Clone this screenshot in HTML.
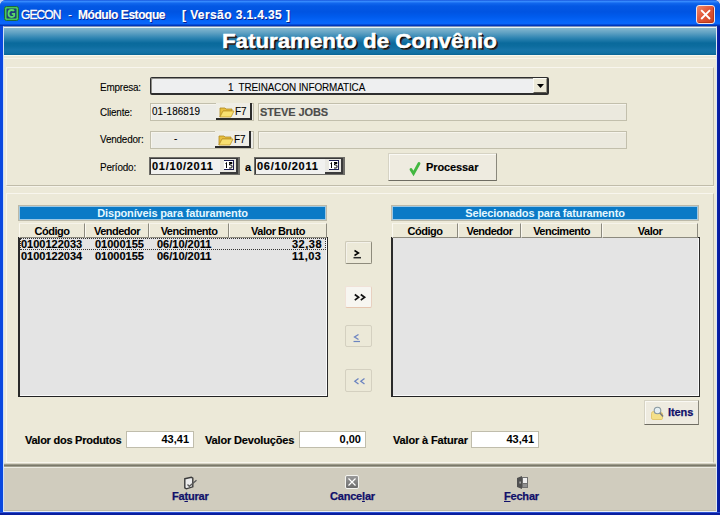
<!DOCTYPE html>
<html><head><meta charset="utf-8">
<style>
*{margin:0;padding:0;box-sizing:border-box}
html,body{width:720px;height:515px;overflow:hidden;background:#c8d4f0;font-family:"Liberation Sans",sans-serif;font-size:11px;color:#000}
.a{position:absolute}
#win{position:absolute;left:0;top:0;width:720px;height:515px;background:linear-gradient(to right,#0a48e0 0,#0a48e0 704px,#0a2ab0 716px,#08189a 720px);border-radius:6px 6px 0 0;overflow:hidden}
#title{position:absolute;left:0;top:0;width:720px;height:26px;
 background:linear-gradient(to bottom,#0a3fd0 0px,#3a90ff 1px,#2f82fa 2px,#1268ee 3px,#0458e4 6px,#0054e2 12px,#005cee 17px,#0866fa 22px,#0a66fa 24px,#0036b8 25px,#0036b8 26px);}
#client{position:absolute;left:3px;top:26px;width:714px;height:486px;background:#ece9d8;border-left:1px solid #cfe0f6;border-top:1px solid #7f90b8;border-right:1px solid #e0e8f4;border-bottom:1px solid #e8eef8}
#hdr{position:absolute;left:4px;top:28px;width:712px;height:27px;background:linear-gradient(to bottom,#86b8d0 0px,#5ea0c2 5px,#2e84b2 10px,#0a6a9c 15px,#0c6c9e 18px,#1674a8 22px,#1272a4 25px,#0a6494 27px)}
.t{position:absolute;white-space:pre;line-height:13px}
.lbl{position:absolute;white-space:pre;font-size:11px;letter-spacing:-0.2px;line-height:13px;color:#000;transform:scaleX(0.9);transform-origin:0 0;-webkit-text-stroke:0.1px #000}
.b{font-weight:bold;-webkit-text-stroke:0.15px currentColor}
.fld{position:absolute;background:#ebe9de;border:1px solid #c2bfac;box-shadow:inset 1px 1px 0 #f6f4ec}
.date{position:absolute;background:#f1f1ef;border:1px solid #6e6d68;border-right-width:2px;box-shadow:inset 1px 1px 0 #3a3a3a}
.calb{position:absolute;width:18px;height:15px;background:#e9e8e2;border-bottom:2px solid #3a3a3a;border-right:2px solid #3a3a3a}
.cal{position:absolute;left:4px;top:2px;width:11px;height:9px;background:#fff;border:1px solid #2a2a70;border-top-width:2px}
.f7{position:absolute;width:36px;height:17px;background:#efeee6;border-right:2px solid #2c2c2c;border-bottom:2px solid #2c2c2c}
.bar{position:absolute;height:16px;background:#0a7ac6;border:1px solid #bcb9a8;box-shadow:inset 0 0 0 1px #9cc8e4;color:#e4f8ff;font-weight:bold;text-align:center;line-height:15px;letter-spacing:-0.15px}
.hd{position:absolute;top:223px;height:15px;background:#ece9d8;border-top:1px solid #f6f4ea;border-left:1px solid #faf8f0;border-right:1px solid #8c8a7e;border-bottom:1px solid #8c8a7e;font-weight:bold;text-align:center;line-height:15px;letter-spacing:-0.5px}
.list{position:absolute;top:237px;height:160px;background:#e4e4e4;border-left:2px solid #2a2a2a;border-top:1px solid #222;border-right:1px solid #2a2a2a;border-bottom:1px solid #222;box-shadow:inset -1px -1px 0 #fafafa}
.mbtn{position:absolute;left:345px;width:27px;height:23px;background:#ece9d8;border:1px solid #cdc9b8;border-right-color:#8e8b7c;border-bottom-color:#8e8b7c;border-radius:2px;box-shadow:inset 1px 1px 0 #f4f2ea}
.tot{position:absolute;top:431px;height:17px;background:#fff;border:1px solid #c0bdac;font-weight:bold;text-align:right;padding-right:4px;line-height:15px}
.tb{position:absolute;top:490px;color:#10106a;font-weight:bold;white-space:pre;line-height:13px;letter-spacing:-0.2px;-webkit-text-stroke:0.25px #10106a}
</style></head><body>
<div id="win">
 <div id="title">
  <svg class="a" style="left:4px;top:6px" width="15" height="15"><rect x="0.5" y="0.5" width="14" height="14" rx="2" fill="#48c858" stroke="#1c6a3a"/><rect x="2.5" y="2.5" width="10" height="10" rx="1" fill="#1e3e78"/><path d="M10 5Q9.5 4 7.5 4Q4.5 4 4.5 7.5Q4.5 11 7.5 11Q9.5 11 10.2 10V7.8H7.8" fill="none" stroke="#58d868" stroke-width="1.8"/></svg>
  <div class="t" style="left:21px;top:9px;color:#fff;font-size:12px;letter-spacing:-0.9px;-webkit-text-stroke:0.35px #fff;text-shadow:1px 1px 0 #0a1e8c">GECON</div>
  <div class="t" style="left:68px;top:9px;color:#fff;font-size:12px;text-shadow:1px 1px 0 #0a1e8c">-</div>
  <div class="t b" style="left:78px;top:9px;color:#fff;font-size:12px;letter-spacing:-0.45px;text-shadow:1px 1px 0 #0a1e8c">Módulo Estoque</div>
  <div class="t b" style="left:182px;top:9px;color:#fff;font-size:12px;letter-spacing:0.4px;text-shadow:1px 1px 0 #0a1e8c">[ Versão 3.1.4.35 ]</div>
  <div class="a" style="left:696px;top:5px;width:19px;height:19px;border:1px solid #f0e4e8;border-radius:3px;background:linear-gradient(135deg,#f08868 0%,#e2583a 45%,#c8401e 100%);box-shadow:inset -1px -1px 0 #b83818"><svg class="a" style="left:0;top:0" width="17" height="17"><path d="M4.2 4.2L13 13M13 4.2L4.2 13" stroke="#fff" stroke-width="1.9"/></svg></div>
 </div>
 <div id="client"></div>
 <div id="hdr"></div>
 <div class="t" style="left:222px;top:30px;color:#fff;font-size:20px;line-height:22px;font-weight:bold;transform:scaleX(1.114);transform-origin:0 0;-webkit-text-stroke:0.5px #fff;text-shadow:1px 1px 0 #000,2px 2px 0 #303030">Faturamento de Convênio</div>

 <!-- top panel lines -->
 <div class="a" style="left:4px;top:27px;width:712px;height:1px;background:#e8f4f4"></div><div class="a" style="left:4px;top:55px;width:712px;height:1px;background:#faf9ee"></div><div class="a" style="left:4px;top:58px;width:712px;height:1px;background:#f6f4ea"></div>
 <div class="a" style="left:6px;top:67px;width:708px;height:119px;border-top:1px solid #f8f6ee;border-left:1px solid #f8f6ee;border-right:1px solid #c4c0ae;border-bottom:1px solid #c0bcaa"></div><div class="a" style="left:6px;top:186px;width:708px;height:1px;background:#f6f4ea"></div>
 <div class="a" style="left:6px;top:193px;width:708px;height:270px;border-top:1px solid #f8f6ee;border-left:1px solid #f8f6ee;border-right:1px solid #c4c0ae;border-bottom:1px solid #f8f6ee"></div>

 <!-- labels -->
 <div class="lbl" style="left:100px;top:81px">Empresa:</div>
 <div class="lbl" style="left:100px;top:106px">Cliente:</div>
 <div class="lbl" style="left:100px;top:133px">Vendedor:</div>
 <div class="lbl" style="left:100px;top:161px">Período:</div>

 <!-- combo -->
 <div class="a" style="left:150px;top:77px;width:399px;height:18px;background:#eeeff0;border:1px solid #2e2e2e;border-right-width:2px;border-bottom-width:2px;border-radius:2px;box-shadow:inset 1px 1px 0 #8e8e88"></div>
 <div class="a" style="left:533px;top:78px;width:14px;height:15px;background:#ece9d8;border-left:1px solid #fafaf4;border-top:1px solid #fafaf4;border-right:1px solid #9a988a;border-bottom:1px solid #5a5850"><svg class="a" style="left:3px;top:5px" width="8" height="5"><path d="M0 0H7L3.5 4Z" fill="#000"/></svg></div>
 <div class="lbl" style="left:228px;top:81px;letter-spacing:-0.1px">1  TREINACON INFORMATICA</div>

 <!-- cliente -->
 <div class="fld" style="left:150px;top:103px;width:104px;height:18px;background:#ecece7"></div>
 <div class="lbl" style="left:152px;top:105px;letter-spacing:0.1px">01-186819</div>
 <div class="f7" style="left:216px;top:103px">
  <svg class="a" style="left:3px;top:2px" width="16" height="13"><path d="M1 3h5l1 1h6v2H4L1 12Z" fill="#e8c040" stroke="#b08820" stroke-width="0.8"/><path d="M1 12L4 6h11l-3 6Z" fill="#f8e070" stroke="#c09828" stroke-width="0.8"/></svg>
  <div class="lbl" style="left:19px;top:2px;letter-spacing:0">F7</div>
 </div>
 <div class="fld" style="left:258px;top:103px;width:369px;height:18px"></div>
 <div class="t b" style="left:260px;top:106px;color:#4c4c4a;font-size:11px;letter-spacing:-0.1px">STEVE JOBS</div>

 <!-- vendedor -->
 <div class="fld" style="left:150px;top:131px;width:104px;height:18px;background:#ecece7"></div>
 <div class="lbl" style="left:174px;top:132px">-</div>
 <div class="f7" style="left:215px;top:131px">
  <svg class="a" style="left:3px;top:2px" width="16" height="13"><path d="M1 3h5l1 1h6v2H4L1 12Z" fill="#e8c040" stroke="#b08820" stroke-width="0.8"/><path d="M1 12L4 6h11l-3 6Z" fill="#f8e070" stroke="#c09828" stroke-width="0.8"/></svg>
  <div class="lbl" style="left:19px;top:2px;letter-spacing:0">F7</div>
 </div>
 <div class="fld" style="left:258px;top:131px;width:369px;height:18px"></div>

 <!-- periodo -->
 <div class="date" style="left:149px;top:157px;width:91px;height:18px">
  <div class="t b" style="left:2px;top:2px;letter-spacing:0.7px">01/10/2011</div>
  <div class="calb" style="left:70px;top:1px"><svg class="a" style="left:4px;top:1px" width="11" height="11"><rect x="0" y="0" width="10" height="10" fill="#fff"/><path d="M0 0.5H10M9.5 0V10M0 9.5H10" stroke="#1a1a50" stroke-width="1"/><path d="M1.5 3.5L2.5 2.5V8M5 2.5H8V3.5H5.5V5H7Q8 5 8 6V7.2Q8 8 7 8H5" fill="none" stroke="#000" stroke-width="1"/></svg></div>
 </div>
 <div class="t b" style="left:245px;top:161px">a</div>
 <div class="date" style="left:254px;top:157px;width:91px;height:18px">
  <div class="t b" style="left:2px;top:2px;letter-spacing:0.7px">06/10/2011</div>
  <div class="calb" style="left:70px;top:1px"><svg class="a" style="left:4px;top:1px" width="11" height="11"><rect x="0" y="0" width="10" height="10" fill="#fff"/><path d="M0 0.5H10M9.5 0V10M0 9.5H10" stroke="#1a1a50" stroke-width="1"/><path d="M1.5 3.5L2.5 2.5V8M5 2.5H8V3.5H5.5V5H7Q8 5 8 6V7.2Q8 8 7 8H5" fill="none" stroke="#000" stroke-width="1"/></svg></div>
 </div>

 <!-- processar -->
 <div class="a" style="left:388px;top:153px;width:109px;height:28px;background:#eeebe0;border:1px solid #d6d3c4;border-right-color:#8a887c;border-bottom-color:#6e6c62;box-shadow:inset 1px 1px 0 #faf9f4"></div>
 <svg class="a" style="left:408px;top:161px" width="14" height="16"><path d="M3 8.5L5.5 12.5L11 2.5" fill="none" stroke="#42b840" stroke-width="2.8" stroke-linecap="round"/></svg>
 <div class="t b" style="left:426px;top:161px;letter-spacing:-0.1px">Processar</div>

 <!-- left list -->
 <div class="bar" style="left:18px;top:205px;width:309px">Disponíveis para faturamento</div>
 <div class="list" style="left:18px;width:310px"></div>
 <div class="hd" style="left:19px;width:66px">Código</div>
 <div class="hd" style="left:85px;width:64px">Vendedor</div>
 <div class="hd" style="left:149px;width:80px">Vencimento</div>
 <div class="hd" style="left:229px;width:98px">Valor Bruto</div>
 <div class="a" style="left:20px;top:238px;width:306px;height:12px;border:1px dotted #333"></div>
 <div class="t b" style="left:21px;top:238px">0100122033</div>
 <div class="t b" style="left:95px;top:238px">01000155</div>
 <div class="t b" style="left:157px;top:238px">06/10/2011</div>
 <div class="t b" style="left:292px;top:238px;letter-spacing:0.5px">32,38</div>
 <div class="t b" style="left:21px;top:250px">0100122034</div>
 <div class="t b" style="left:95px;top:250px">01000155</div>
 <div class="t b" style="left:157px;top:250px">06/10/2011</div>
 <div class="t b" style="left:292px;top:250px;letter-spacing:0.5px">11,03</div>

 <!-- middle buttons -->
 <div class="mbtn" style="top:241px"></div>
 <svg class="a" style="left:350px;top:246px" width="16" height="16"><path d="M4.5 4.5L8.5 7L4.5 9.5" fill="none" stroke="#000" stroke-width="1.5"/><path d="M3.5 11.7H11" stroke="#2a2a2a" stroke-width="1.5"/></svg>
 <div class="mbtn" style="top:286px;height:22px;background:#f7f6f1;border-color:#f0e2d8;border-bottom-color:#e6c6b0;border-right-color:#e8d0c0;box-shadow:none"></div>
 <svg class="a" style="left:350px;top:290px" width="20" height="14"><path d="M4.8 4.5L8.6 7.3L4.8 10.1M10.8 4.5L14.6 7.3L10.8 10.1" fill="none" stroke="#111" stroke-width="1.7"/></svg>
 <div class="mbtn" style="top:325px;height:22px;border-color:#d4d0c0;box-shadow:none"></div>
 <svg class="a" style="left:350px;top:330px" width="16" height="16"><path d="M8.5 4.5L4.5 7L8.5 9.5" fill="none" stroke="#6c84c0" stroke-width="1.3"/><path d="M3.5 11.5H10" stroke="#6c84c0" stroke-width="1.2"/></svg>
 <div class="mbtn" style="top:369px;height:23px;border-color:#d4d0c0;box-shadow:none"></div>
 <svg class="a" style="left:350px;top:374px" width="20" height="14"><path d="M8.5 4.5L4.8 7.3L8.5 10.1M14.5 4.5L10.8 7.3L14.5 10.1" fill="none" stroke="#6c84c0" stroke-width="1.3"/></svg>

 <!-- right list -->
 <div class="bar" style="left:391px;top:205px;width:308px">Selecionados para faturamento</div>
 <div class="list" style="left:391px;width:309px"></div>
 <div class="hd" style="left:392px;width:66px">Código</div>
 <div class="hd" style="left:458px;width:63px">Vendedor</div>
 <div class="hd" style="left:521px;width:81px">Vencimento</div>
 <div class="hd" style="left:602px;width:96px">Valor</div>

 <!-- itens -->
 <div class="a" style="left:644px;top:400px;width:55px;height:25px;background:#eeebe0;border:1px solid #d6d3c4;border-right-color:#8a887c;border-bottom-color:#6e6c62;box-shadow:inset 1px 1px 0 #faf9f4"></div>
 <svg class="a" style="left:650px;top:405px" width="16" height="16"><path d="M1.5 8.5Q1.5 6.5 3.5 6.5H6L7 7.5H11Q12.5 7.5 12.5 9V13.5Q12.5 14.5 11 14.5H3Q1.5 14.5 1.5 13Z" fill="#f4e08a" stroke="#e0c060" stroke-width="0.8"/><circle cx="7.5" cy="5.5" r="3.3" fill="#e4eef2" stroke="#8898a0" stroke-width="1.1"/><path d="M10 8L13 11.5" stroke="#7a7a80" stroke-width="1.6"/></svg>
 <div class="t b" style="left:668px;top:406px;color:#10106a;letter-spacing:-0.1px;-webkit-text-stroke:0.25px #10106a">Itens</div>

 <!-- totals -->
 <div class="t b" style="left:25px;top:434px;letter-spacing:-0.25px">Valor dos Produtos</div>
 <div class="tot" style="left:126px;width:68px">43,41</div>
 <div class="t b" style="left:205px;top:434px;letter-spacing:-0.15px">Valor Devoluções</div>
 <div class="tot" style="left:299px;width:67px">0,00</div>
 <div class="t b" style="left:393px;top:434px;letter-spacing:-0.15px">Valor à Faturar</div>
 <div class="tot" style="left:471px;width:68px">43,41</div>

 <!-- bottom toolbar -->
 <div class="a" style="left:4px;top:463px;width:712px;height:1px;background:#d8d5c6"></div>
 <div class="a" style="left:4px;top:464px;width:712px;height:3px;background:linear-gradient(#9c9a8a 0,#9c9a8a 1px,#7a786a 1px,#7a786a 2px,#a09e8e 2px)"></div>
 <div class="a" style="left:4px;top:467px;width:712px;height:1px;background:#ecebe2"></div>
 <div class="a" style="left:4px;top:468px;width:712px;height:42px;background:#d0ccbe"></div>
 <div class="a" style="left:4px;top:510px;width:712px;height:1px;background:#bdb9a6"></div>
 <div class="a" style="left:0;top:512px;width:720px;height:3px;background:linear-gradient(#2a50d4 0,#2a50d4 1px,#0a1e9e 1px)"></div>

 <svg class="a" style="left:183px;top:476px" width="15" height="14"><path d="M1.8 2.8L8.3 1.2L9.8 2.2V10.8L3.3 12.8L1.8 11.8Z" fill="#ececec" stroke="#3c3c3c" stroke-width="1.4"/><path d="M4.5 8.5L6.3 10.3L13.5 4.2" fill="none" stroke="#5a5a5a" stroke-width="1.3"/></svg>
 <div class="tb" style="left:172px">Fa<u>t</u>urar</div>

 <div class="a" style="left:345px;top:475px;width:14px;height:14px;border-radius:2px;background:linear-gradient(#9a9a9a,#6c6c6c);border:1px solid #f4f4f0"><svg class="a" style="left:0;top:0" width="12" height="12"><path d="M2.5 2.5L9.5 9.5M9.5 2.5L2.5 9.5" stroke="#fff" stroke-width="1.2"/></svg></div>
 <div class="tb" style="left:330px">Cance<u>l</u>ar</div>

 <svg class="a" style="left:516px;top:476px" width="13" height="13"><path d="M1 2L6 0V13L1 11Z" fill="#505050"/><rect x="6" y="1" width="6" height="11" fill="#707070"/><rect x="7" y="2" width="4" height="5" fill="#f0f0f0"/><rect x="7" y="8" width="4" height="3" fill="#909090"/><rect x="3.5" y="5.5" width="1.2" height="2" fill="#c8c8c8"/></svg>
 <div class="tb" style="left:504px"><u>F</u>echar</div>
</div>
</body></html>
